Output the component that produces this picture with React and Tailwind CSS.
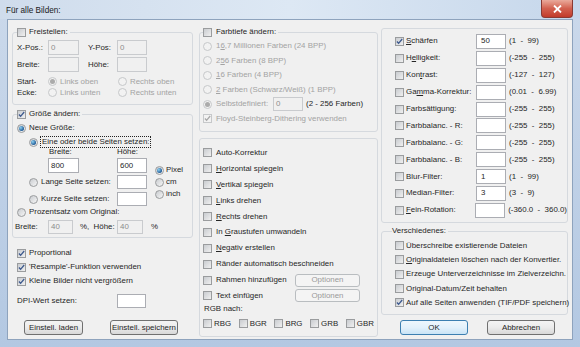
import React from "react";

// Win7-style "Für alle Bilden" batch dialog

const Check = ({ on, off }) => (
  <span
    className={`shrink-0 w-[9px] h-[9px] border flex items-center justify-center ${
      off
        ? "border-[#c6c8ca] bg-[#f2f2f2]"
        : "border-[#9a9c9e] bg-linear-to-br from-[#c9ccd0] to-[#f0f0f0]"
    }`}
  >
    {on && (
      <svg width="7" height="7" viewBox="0 0 7 7">
        <path
          d="M0.9 3.5 L2.6 5.3 L6.2 1"
          fill="none"
          stroke={off ? "#a8a8a8" : "#3e5a8e"}
          strokeWidth="1.3"
        />
      </svg>
    )}
  </span>
);

const Radio = ({ on, off }) => (
  <span
    className={`shrink-0 w-[9px] h-[9px] rounded-full border flex items-center justify-center ${
      off
        ? "border-[#c6c8ca] bg-[#f2f2f2]"
        : "border-[#9a9c9e] bg-linear-to-br from-[#c9ccd0] to-[#f6f6f6]"
    }`}
  >
    {on && (
      <span
        className={`w-[5px] h-[5px] rounded-full ${
          off
            ? "bg-[#ababab]"
            : "bg-[radial-gradient(circle_at_35%_35%,#8fd2f2,#1f5a96_70%)]"
        }`}
      />
    )}
  </span>
);

const Field = ({ w, h = "h-[15px]", v, off, className = "" }) => (
  <div
    className={`${w} ${h} shrink-0 border flex items-center pl-[2px] ${
      off
        ? "border-[#c9cbce] bg-[#f0f0f0] text-[#8c8c8c]"
        : "border-[#abadb3] bg-white"
    } ${className}`}
  >
    {v}
  </div>
);

const Btn = ({ w, h = "h-[15px]", kind, children, className = "" }) => {
  const look =
    kind === "def"
      ? "border-[#3c7fb1] bg-linear-to-b from-[#eef7fd] via-[#e3f1fb] to-[#c9e4f6]"
      : kind === "off"
      ? "border-[#b9bdc0] bg-[#f4f4f4] text-[#9a9a9a]"
      : "border-[#707070] bg-linear-to-b from-[#f4f4f4] via-[#ebebeb] to-[#d8d8d8]";
  return (
    <div
      className={`${w} ${h} shrink-0 border rounded-[3px] flex items-center justify-center ${look} ${className}`}
    >
      {children}
    </div>
  );
};

const grp = "border border-[#d5d9de] rounded-[3px] min-w-0";
const gray = "text-[#a3a3a3]";

const RIGHT_ROWS = [
  { l: <><u>S</u>chärfen</>, v: "50", r: "(1  -  99)", on: true },
  { l: <>H<u>e</u>lligkeit:</>, v: "", r: "(-255  -  255)" },
  { l: <>Kon<u>t</u>rast:</>, v: "", r: "(-127  -  127)" },
  { l: <>Ga<u>m</u>ma-Korrektur:</>, v: "", r: "(0.01  -  6.99)" },
  { l: "Farbsättigung:", v: "", r: "(-255  -  255)" },
  { l: "Farbbalanc. - R:", v: "", r: "(-255  -  255)" },
  { l: "Farbbalanc. - G:", v: "", r: "(-255  -  255)" },
  { l: "Farbbalanc. - B:", v: "", r: "(-255  -  255)" },
  { l: "Blur-Filter:", v: "1", r: "(1  -  99)" },
  { l: "Median-Filter:", v: "3", r: "(3  -  9)" },
  { l: <><u>F</u>ein-Rotation:</>, v: "", r: "(-360.0  -  360.0)" },
];

const MIDDLE_ROWS = [
  "Auto-Korrektur",
  <><u>H</u>orizontal spiegeln</>,
  <><u>V</u>ertikal spiegeln</>,
  <><u>L</u>inks drehen</>,
  <><u>R</u>echts drehen</>,
  <>In <u>G</u>raustufen umwandeln</>,
  <><u>N</u>egativ erstellen</>,
  "Ränder automatisch beschneiden",
];

export default function App() {
  return (
    <div className="w-[580px] h-[347px] overflow-hidden flex flex-col bg-linear-to-b from-[#cbd9eb] to-[#b3c8e2] font-['Liberation_Sans',Arial,sans-serif] text-[7.9px] leading-[10px] text-[#262626]">
      {/* TITLE BAR */}
      <div className="h-[19px] shrink-0 flex justify-between items-start bg-linear-to-r from-[#cfdcec] via-[#dde8f4] to-[#c6d7eb]">
        <span className="pl-[6px] pt-[6px] text-[8.2px] text-[#1b1b1b]">
          Für alle Bilden:
        </span>
        <div className="mr-[7px] w-[32px] h-[18px] rounded-b-[4px] border border-t-0 border-[#8a3a33] bg-linear-to-b from-[#e9a99b] via-[#d2604f] to-[#c23a2a] flex items-center justify-center">
          <svg width="9" height="8" viewBox="0 0 9 8">
            <path d="M1 0.5 L8 7.5 M8 0.5 L1 7.5" stroke="#fff" strokeWidth="1.8" />
          </svg>
        </div>
      </div>

      {/* CLIENT AREA */}
      <div className="mx-[7px] h-[321px] shrink-0 border border-[#8ea3bd] bg-[#f0f0f0] flex items-start pl-[4px]">
        {/* LEFT COLUMN */}
        <div className="w-[181px] shrink-0 flex flex-col pt-[7px]">
          <fieldset className={`${grp} h-[78px] px-[4px]`}>
            <legend className="h-[10px] pr-[2px]">
              <span className="flex items-center h-[10px]">
                <Check />
                <span className="ml-[3px]">Freistellen:</span>
              </span>
            </legend>
            <div className="mt-[3px] h-[15px] flex items-center">
              <span className="w-[31px]">X-Pos.:</span>
              <Field w="w-[31px]" v="0" off />
              <span className="ml-[9px] w-[29px]">Y-Pos:</span>
              <Field w="w-[30px]" v="0" off />
            </div>
            <div className="mt-[2px] h-[15px] flex items-center">
              <span className="w-[31px]">Breite:</span>
              <Field w="w-[31px]" off />
              <span className="ml-[9px] w-[29px]">Höhe:</span>
              <Field w="w-[30px]" off />
            </div>
            <div className="mt-[4px] flex leading-[11px]">
              <div className="w-[31px]">
                Start-
                <br />
                Ecke:
              </div>
              <div className={`grid grid-cols-[70px_auto] ${gray}`}>
                <div className="h-[11px] flex items-center">
                  <Radio on off />
                  <span className="ml-[3px]">Links oben</span>
                </div>
                <div className="h-[11px] flex items-center">
                  <Radio off />
                  <span className="ml-[3px]">Rechts oben</span>
                </div>
                <div className="h-[11px] flex items-center">
                  <Radio off />
                  <span className="ml-[3px]">Links unten</span>
                </div>
                <div className="h-[11px] flex items-center">
                  <Radio off />
                  <span className="ml-[3px]">Rechts unten</span>
                </div>
              </div>
            </div>
          </fieldset>

          <fieldset className={`${grp} mt-[4px] h-[129px] px-[4px]`}>
            <legend className="h-[10px] pr-[2px]">
              <span className="flex items-center h-[10px]">
                <Check on />
                <span className="ml-[3px]">Größe ändern:</span>
              </span>
            </legend>
            <div className="mt-[4px] h-[10px] flex items-center">
              <Radio on />
              <span className="ml-[3px]">Neue Größe:</span>
            </div>
            <div className="mt-[4px] h-[10px] flex items-center pl-[12px]">
              <Radio on />
              <span className="ml-[2px] h-[12px] px-[1px] border border-dotted border-[#222] flex items-center">
                Eine oder beide Seiten setzen:
              </span>
            </div>
            <div className="h-[10px] flex items-center pl-[32px]">
              <span className="w-[68px]">Breite:</span>
              <span>Höhe:</span>
            </div>
            <div className="mt-[1px] flex">
              <div className="w-[138px] shrink-0">
                <div className="h-[15px] flex items-center pl-[31px]">
                  <Field w="w-[31px]" v="800" />
                  <Field w="w-[30px]" v="600" className="ml-[38px]" />
                </div>
                <div className="mt-[2px] h-[14px] flex items-center pl-[12px]">
                  <Radio />
                  <span className="ml-[3px] w-[76px]">Lange Seite setzen:</span>
                  <Field w="w-[30px]" h="h-[14px]" />
                </div>
                <div className="mt-[3px] h-[14px] flex items-center pl-[12px]">
                  <Radio />
                  <span className="ml-[3px] w-[76px]">Kurze Seite setzen:</span>
                  <Field w="w-[30px]" h="h-[14px]" />
                </div>
              </div>
              <div className="mt-[6px] flex flex-col">
                {[
                  ["Pixel", true],
                  ["cm", false],
                  ["inch", false],
                ].map(([t, on]) => (
                  <div key={t} className="h-[12px] flex items-center">
                    <Radio on={on} />
                    <span className="ml-[2px]">{t}</span>
                  </div>
                ))}
              </div>
            </div>
            <div className="mt-[1px] h-[10px] flex items-center">
              <Radio />
              <span className="ml-[3px]">Prozentsatz vom Original:</span>
            </div>
            <div className="mt-[3px] h-[14px] flex items-center">
              <span className="-ml-[2px] w-[33px]">Breite:</span>
              <Field w="w-[25px]" h="h-[14px]" v="40" off />
              <span className="w-[44px] pl-[7px]">%,&nbsp; Höhe:</span>
              <Field w="w-[26px]" h="h-[14px]" v="40" off />
              <span className="ml-[8px]">%</span>
            </div>
          </fieldset>

          <div className="mt-[8px] flex flex-col pl-[5px]">
            {["Proportional", "'Resample'-Funktion verwenden", "Kleine Bilder nicht vergrößern"].map(
              (t) => (
                <div key={t} className="h-[14px] flex items-center">
                  <Check on />
                  <span className="ml-[3px]">{t}</span>
                </div>
              )
            )}
            <div className="mt-[6px] h-[14px] flex items-center">
              <span className="w-[100px]">DPI-Wert setzen:</span>
              <Field w="w-[29px]" h="h-[14px]" />
            </div>
          </div>
          <div className="mt-[12px] flex">
            <Btn w="w-[59px]" className="ml-[12px]">Einstell. laden</Btn>
            <Btn w="w-[68px]" className="ml-[27px]">Einstell. speichern</Btn>
          </div>
        </div>

        {/* MIDDLE COLUMN */}
        <div className="ml-[6px] w-[179px] shrink-0 flex flex-col pt-[7px]">
          <fieldset className={`${grp} h-[105px] px-[3px]`}>
            <legend className="h-[10px] pr-[2px]">
              <span className="flex items-center h-[10px]">
                <Check />
                <span className="ml-[4px]">Farbtiefe ändern:</span>
              </span>
            </legend>
            <div className="mt-[2px] flex flex-col">
              {[
                <>1<u>6</u>,7 Millionen Farben (24 BPP)</>,
                <>2<u>5</u>6 Farben (8 BPP)</>,
                <><u>1</u>6 Farben (4 BPP)</>,
                <><u>2</u> Farben (Schwarz/Weiß) (1 BPP)</>,
              ].map((t, i) => (
                <div key={i} className={`h-[14.5px] flex items-center ${gray}`}>
                  <Radio off />
                  <span className="ml-[4px]">{t}</span>
                </div>
              ))}
              <div className="h-[14.5px] flex items-center">
                <Radio on off />
                <span className={`ml-[4px] w-[57px] ${gray}`}>Selbstdefiniert:</span>
                <Field w="w-[30px]" h="h-[14px]" v="0" off />
                <span className="ml-[3px]">(2 - 256 Farben)</span>
              </div>
              <div className={`h-[14.5px] flex items-center ${gray}`}>
                <Check on off />
                <span className="ml-[4px]">Floyd-Steinberg-Dithering verwenden</span>
              </div>
            </div>
          </fieldset>

          <fieldset className={`${grp} mt-[6px] h-[199px] px-[3px]`}>
            <div className="mt-[6px] flex flex-col">
              {MIDDLE_ROWS.map((t, i) => (
                <div key={i} className="h-[15.9px] flex items-center">
                  <Check />
                  <span className="ml-[4px]">{t}</span>
                </div>
              ))}
              <div className="h-[15.9px] flex items-center">
                <Check />
                <span className="ml-[4px] w-[79px]">Rahmen hinzufügen</span>
                <Btn w="w-[65px]" h="h-[13px]" kind="off">Optionen</Btn>
              </div>
              <div className="h-[15.9px] flex items-center">
                <Check />
                <span className="ml-[4px] w-[79px]">Text einfügen</span>
                <Btn w="w-[65px]" h="h-[13px]" kind="off">Optionen</Btn>
              </div>
              <div className="h-[10px] flex items-center pl-[1px]">RGB nach:</div>
              <div className="mt-[5px] h-[10px] flex items-center">
                {["RBG", "BGR", "BRG", "GRB", "GBR"].map((t) => (
                  <div key={t} className="w-[35.7px] shrink-0 flex items-center">
                    <Check />
                    <span className="ml-[2px]">{t}</span>
                  </div>
                ))}
              </div>
            </div>
          </fieldset>
        </div>

        {/* RIGHT COLUMN */}
        <div className="ml-[3px] w-[187px] shrink-0 flex flex-col pt-[8px]">
          <fieldset className={`${grp} h-[195px] pl-[13px]`}>
            <div className="mt-[4px] flex flex-col">
              {RIGHT_ROWS.map((r, i) => (
                <div key={i} className="h-[16.9px] flex items-center">
                  <Check on={r.on} />
                  <span className="ml-[2px] w-[70px]">{r.l}</span>
                  <Field w="w-[30px]" v={r.v} className="pl-[4px]" />
                  <span className="ml-[3px] whitespace-pre">{r.r}</span>
                </div>
              ))}
            </div>
          </fieldset>

          <fieldset className={`${grp} mt-[3px] h-[89px] pl-[13px]`}>
            <legend className="h-[10px] -ml-[3px] pr-[2px]">
              <span className="flex items-center h-[10px]">Verschiedenes:</span>
            </legend>
            <div className="mt-[2.5px] flex flex-col">
              {[
                ["Überschreibe existierende Dateien", false],
                [<><u>O</u>riginaldateien löschen nach der Konvertier.</>, false],
                ["Erzeuge Unterverzeichnisse im Zielverzeichn.", false],
                ["Original-Datum/Zeit behalten", false],
                ["Auf alle Seiten anwenden (TIF/PDF speichern)", true],
              ].map(([t, on], i) => (
                <div key={i} className="h-[14.3px] flex items-center">
                  <Check on={on} />
                  <span className="ml-[2px] whitespace-nowrap">{t}</span>
                </div>
              ))}
            </div>
          </fieldset>
          <div className="mt-[5px] flex">
            <Btn w="w-[68px]" kind="def" className="ml-[19px]">OK</Btn>
            <Btn w="w-[68px]" className="ml-[19px]">Abbrechen</Btn>
          </div>
        </div>
      </div>
    </div>
  );
}
